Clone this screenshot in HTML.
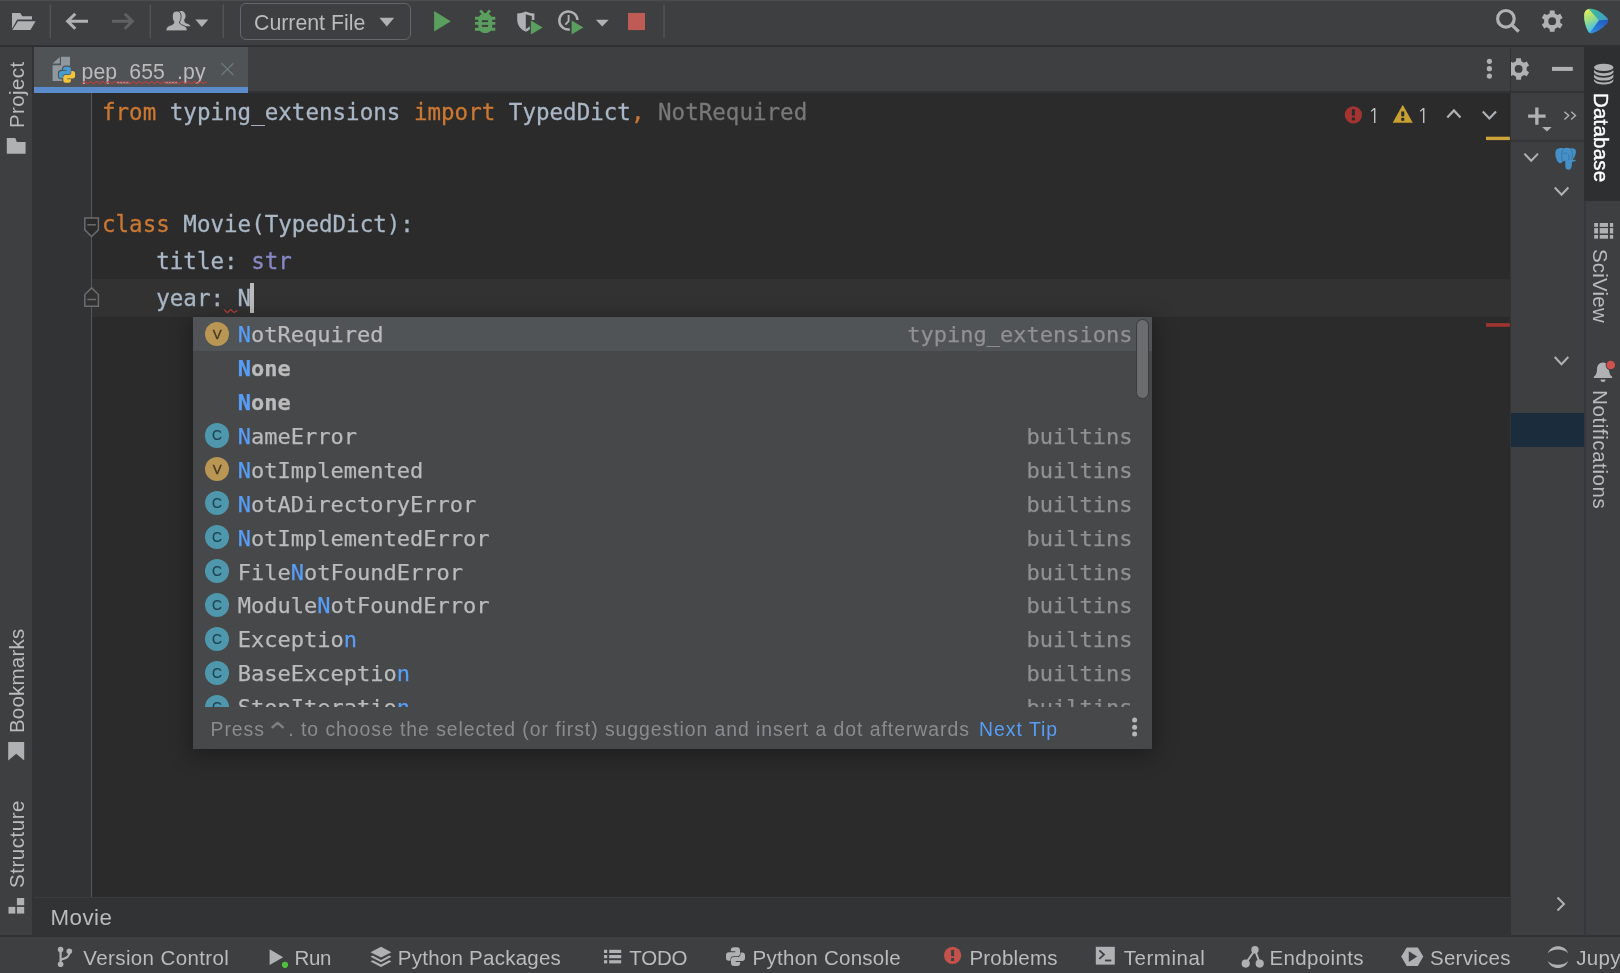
<!DOCTYPE html>
<html lang="en">
<head>
<meta charset="utf-8">
<title>pep_655_.py</title>
<style>
*{box-sizing:border-box;margin:0;padding:0}
html,body{width:1620px;height:973px;overflow:hidden;background:#3e3f41}
body{will-change:transform;position:relative;font-family:"Liberation Sans",sans-serif;color:#bbbbbb;font-size:20px}
.abs{position:absolute}
svg{position:absolute;overflow:visible}
/* top toolbar */
#toolbar{left:0;top:0;width:1620px;height:45px;background:#3e3f41}
#tbline{left:0;top:45px;width:1620px;height:2px;background:#2e3032}
.sep{width:1px;height:33px;top:5px;background:#565859}
#runcfg{left:240px;top:3px;width:171px;height:37px;border:1.5px solid #646769;border-radius:6px}
#runcfg span{position:absolute;left:13px;top:7px;font-size:21.3px;line-height:24px;color:#bbbbbb;white-space:nowrap}
/* left stripe */
#lstripe{left:0;top:47px;width:32px;height:890px;background:#3e3f41}
#lstripeb{left:32px;top:47px;width:2px;height:890px;background:#313335}
.vtext{white-space:nowrap;font-size:20.5px;line-height:24px;color:#bbbbbb}
.vup{transform-origin:0 0;transform:rotate(-90deg)}
.vdn{transform-origin:0 0;transform:rotate(90deg)}
/* tab bar */
#tabbar{left:34px;top:47px;width:1476px;height:46px;background:#3e3f41;border-bottom:2px solid #323335}
#tab{left:34px;top:47px;width:214px;height:41px;background:#505355}
#tabul{left:34px;top:87.4px;width:214px;height:5.6px;background:#5a8ccb}
#tabtxt{left:81.5px;top:60px;letter-spacing:.15px;font-size:21.2px;line-height:24px;color:#bbbbbb;white-space:nowrap}
/* editor */
#editor{left:34px;top:93px;width:1476px;height:804.5px;background:#2b2b2b;overflow:hidden}
#gutter{left:34px;top:93px;width:57px;height:804.5px;background:#313335}
#gline{left:91px;top:93px;width:1.4px;height:804.5px;background:#555759}
#curline{left:92.3px;top:279px;width:1417.6px;height:38px;background:#323232}
.code{font-family:"DejaVu Sans Mono","Liberation Mono",monospace;font-size:22.5px;line-height:37.33px;white-space:pre;color:#a9b7c6;left:102px;letter-spacing:0.015px;-webkit-text-stroke:.3px}
.kw{color:#cc7832}.bi{color:#8888c6}.un{color:#787878}
#caret{left:249.9px;top:283px;width:3.7px;height:30px;background:#bbbbbb}
.big1{font-family:"NanumGothic","Liberation Sans",sans-serif;font-size:20px;line-height:24px;color:#c2c2c2;margin-top:.6px;margin-left:.3px}
/* popup */
#popup{left:193px;top:316.5px;width:959px;height:432.5px;background:#46484a;box-shadow:0 4px 20px 3px rgba(0,0,0,.3);overflow:hidden}
#psel{left:0;top:0;width:959px;height:34px;background:#515457}
.row{left:0;width:959px;height:33.95px;font-family:"DejaVu Sans Mono","Liberation Mono",monospace;font-size:22px;line-height:33.95px;white-space:pre;color:#bbbbbb;-webkit-text-stroke:.25px}
.row .n{position:absolute;left:44.8px;top:1.4px}
.row .t{position:absolute;right:19.5px;top:1.4px;color:#8f9192}
.row b{font-weight:normal;color:#589df6}
.row .bold,.row .bold b{font-weight:bold}
.ic{position:absolute;left:12px;top:5px;width:24.2px;height:24.2px;border-radius:50%;font-family:"Liberation Sans",sans-serif;font-size:13.4px;line-height:26.2px;text-align:center;font-weight:normal;-webkit-text-stroke:.35px currentColor}
.ic.v{background:#b99653;color:#453a22}
.ic.c{background:#4f97ad;color:#1f4452;font-size:13.8px;line-height:26px;-webkit-text-stroke:.15px currentColor}
#plist{left:0;top:0;width:959px;height:390.8px;overflow:hidden}
#pfoot{left:0;top:390.8px;width:959px;height:41.7px;background:#46484a}
#ptip{left:17.5px;top:9.7px;font-size:19.4px;line-height:24px;color:#8a8c8d;white-space:nowrap;letter-spacing:.95px}
#ptip span{font-family:"DejaVu Sans",sans-serif;display:inline-block;transform-origin:50% 30%;transform:translate(-1.1px,1.1px) scale(1.62,1.45);opacity:.8}
#pnext{left:786px;top:9.7px;font-size:19.4px;line-height:24px;color:#589df6;white-space:nowrap;letter-spacing:1px}
#pscroll{left:942.6px;top:2.8px;width:13.4px;height:79.6px;border-radius:6.7px;background:#6b6c6e;border:1.2px solid #393b3d}
/* right db panel */
#dbpanel{left:1511px;top:47px;width:74px;height:890px;background:#3e3f41}
#dbl{left:1509.7px;top:47px;width:1.5px;height:890px;background:#323335}
#dbhl{left:1511px;top:91px;width:74px;height:1.5px;background:#323335}
#dbhl2{left:1511px;top:140.4px;width:74px;height:1.2px;background:#343638}
#dbsel{left:1511px;top:413px;width:74px;height:34px;background:#1b2c3c}
#rstripe{left:1585px;top:47px;width:35px;height:890px;background:#3e3f41}
#rstripel{left:1584.4px;top:47px;width:1.6px;height:889px;background:#35373a}
#dbbtn{left:1584.4px;top:47px;width:35.6px;height:153.5px;background:#2d2f30}
/* breadcrumbs */
#crumb{left:34px;top:898px;width:1476px;height:39px;background:#313335}
#crumbl{left:34px;top:897px;width:1476px;height:1px;background:#3a3c3e}
#crumbt{left:50.5px;top:905px;font-size:22.3px;line-height:26px;color:#bbbbbb;letter-spacing:.5px}
/* bottom bar */
#bbar{left:0;top:937px;width:1620px;height:36px;background:#3e3f41}
#bbarl{left:0;top:935.4px;width:1620px;height:1.7px;background:#323335}
.bt{top:945.5px;font-size:20.5px;line-height:24px;color:#bbbbbb;white-space:nowrap}
</style>
</head>
<body>
<div class="abs" id="toolbar"></div>
<div class="abs" id="tbline"></div>
<!--TB-->
<svg id="tbicons" style="left:0;top:0" width="1620" height="46" viewBox="0 0 1620 46">
<rect x="0" y="0" width="1620" height="1.2" fill="#4a4c4e"/>
<!-- folder -->
<path d="M12 13 H20.2 L22.3 16.2 H32 V19.6 H17.2 L12 28.8Z" fill="#afb1b3"/>
<path d="M18 21.2 H35.6 L30.4 30 H12.3Z" fill="#afb1b3"/>
<!-- separators -->
<rect x="49.6" y="4.5" width="1.3" height="33.5" fill="#555759"/>
<rect x="149.6" y="4.5" width="1.3" height="33.5" fill="#555759"/>
<rect x="222.6" y="4.5" width="1.3" height="33.5" fill="#555759"/>
<rect x="663.4" y="4.5" width="1.3" height="33.5" fill="#555759"/>
<!-- back / forward -->
<path d="M88 21.3 H68 M75.3 13.8 L67.6 21.3 L75.3 28.8" fill="none" stroke="#afb1b3" stroke-width="3"/>
<path d="M112 21.3 H132 M124.7 13.8 L132.4 21.3 L124.7 28.8" fill="none" stroke="#5f6163" stroke-width="3"/>
<!-- users -->
<ellipse cx="181.300" cy="16" rx="4.300" ry="5.100" fill="#afb1b3"/>
<path d="M178 20 H184.200 C184.200 22.400 185.200 23 187.300 23.800 C189.400 24.600 190.300 25.200 190.300 26.300 H178Z" fill="#afb1b3"/>
<path d="M165.900 30.900 C165.900 27.600 167.300 26.300 170.300 25.300 C172.800 24.400 173.900 23.700 174 22 C172.900 20.800 172.300 18.800 172.300 16.100 C172.300 13 173.900 11.100 176.700 11.100 C179.500 11.100 181.100 13 181.100 16.100 C181.100 18.800 180.500 20.800 179.400 22 C179.500 23.700 180.600 24.400 183.100 25.300 C186.100 26.300 187.200 27.600 187.200 30.900 Z" fill="#afb1b3" stroke="#3e3f41" stroke-width="0.900"/>
<rect x="165" y="30.900" width="23" height="1.500" fill="#3e3f41"/>
<path d="M195.400 19.600 H208.300 L201.850 26.900Z" fill="#afb1b3"/>
<!-- run config dropdown triangle -->
<path d="M379.4 17.8 H394.2 L386.8 26.6Z" fill="#afb1b3"/>
<!-- run -->
<path d="M434.1 11.1 L450.8 21.3 L434.1 31.4Z" fill="#5a9f5e"/>
<!-- bug -->
<g fill="none" stroke="#5a9f5e">
<path d="M480.300 10.300 L484.300 15.200 M490 10.300 L486 15.200" stroke-width="2.700"/>
<path d="M475 18.300 H495.300 M475 23.400 H495.300 M475 29.200 H495.300" stroke-width="2.900"/>
</g>
<path d="M478.300 20.300 c0 -4.600 3.100 -7 6.950 -7 c3.850 0 6.950 2.400 6.950 7 v5.600 c0 4.600 -3.100 7.100 -6.950 7.100 c-3.850 0 -6.950 -2.500 -6.950 -7.100z" fill="#5a9f5e"/>
<rect x="481.900" y="20.200" width="6.200" height="2" fill="#3e3f41"/>
<rect x="481.900" y="24.900" width="6.200" height="2" fill="#3e3f41"/>
<!-- coverage shield -->
<path d="M517.2 13.6 c3 -0.200 5.800 -1 8.600 -2.100 c2.800 1.100 5.600 1.900 8.600 2.100 v6.500 h-2.600 v-4.200 c-2.100 -0.300 -4 -0.800 -6 -1.600 v17.400 c-4.900 -2 -8.600 -6.200 -8.600 -12.100z" fill="#afb1b3"/>
<path d="M525.800 29 v2.700 c1.500 -0.600 2.800 -1.400 4 -2.500 v-3 c-1.100 1.200 -2.500 2.200 -4 2.800z" fill="#afb1b3"/>
<path d="M530.9 20.400 L542.700 27.500 L530.900 34.600Z" fill="#5a9f5e"/>
<!-- profiler clock -->
<path d="M577.500 20 A9.100 9.100 0 1 0 569.800 29.500" fill="none" stroke="#afb1b3" stroke-width="2.500"/>
<path d="M568.600 15 V21.200 L565.300 24.600" fill="none" stroke="#afb1b3" stroke-width="1.900"/>
<path d="M571.600 20.400 L583.400 27.500 L571.600 34.600Z" fill="#5a9f5e"/>
<path d="M595.800 19.700 H608.700 L602.250 26.600Z" fill="#afb1b3"/>
<!-- stop -->
<rect x="628" y="12.900" width="17" height="17.200" fill="#be5b55"/>
<!-- search -->
<circle cx="1505.900" cy="18.800" r="8.300" fill="none" stroke="#afb1b3" stroke-width="3.200"/>
<path d="M1511.800 24.900 L1518.700 31.600" stroke="#afb1b3" stroke-width="3.400" fill="none"/>
<!-- gear -->
<path d="M1554.82 28.97 L1554.58 31.84 L1549.82 31.84 L1549.58 28.97 L1546.78 27.35 L1544.18 28.58 L1541.80 24.46 L1544.16 22.82 L1544.16 19.58 L1541.80 17.94 L1544.18 13.82 L1546.78 15.05 L1549.58 13.43 L1549.82 10.56 L1554.58 10.56 L1554.82 13.43 L1557.62 15.05 L1560.22 13.82 L1562.60 17.94 L1560.24 19.58 L1560.24 22.82 L1562.60 24.46 L1560.22 28.58 L1557.62 27.35Z M1556.10 21.20 A3.9 3.9 0 1 0 1548.30 21.20 A3.9 3.9 0 1 0 1556.10 21.20Z" fill="#afb1b3" fill-rule="evenodd"/>
<!-- space icon -->
<defs>
<linearGradient id="sg1" x1="0" y1="0" x2="0.350" y2="1"><stop offset="0" stop-color="#f6ee54"/><stop offset="0.450" stop-color="#a6e07c"/><stop offset="1" stop-color="#3fc0e8"/></linearGradient>
<linearGradient id="sg2" x1="0" y1="0" x2="1" y2="1"><stop offset="0" stop-color="#3fc28a"/><stop offset="1" stop-color="#3b8fe0"/></linearGradient>
<linearGradient id="sg3" x1="1" y1="0" x2="0" y2="1"><stop offset="0" stop-color="#2456b8"/><stop offset="1" stop-color="#2f8fe6"/></linearGradient>
</defs>
<path d="M1588 9.200 c-2.400 0.800 -3.600 2.400 -3.800 5.500 c-0.300 5.500 1.200 11.500 3.800 16.300 c0.900 1.700 2.200 2.500 4.200 2 c5.400 -1.600 10.600 -5.200 14.600 -9.800 c1.400 -1.700 1.700 -3.100 0.600 -4.900 c-3.600 -4.600 -9 -8.200 -15 -9.400 c-1.700 -0.300 -3.100 -0.200 -4.400 0.300z" fill="url(#sg2)"/>
<path d="M1598.800 20.200 L1608 19.800 c0.500 1.200 0.100 2.200 -0.700 3.300 c-4 4.700 -9.400 8.400 -15.100 9.900 c-1 0.300 -1.900 0.200 -2.700 -0.300z" fill="url(#sg3)"/>
<path d="M1588 9.200 c-2.400 0.800 -3.600 2.400 -3.800 5.500 c-0.300 5.500 1.200 11.500 3.800 16.300 c0.500 0.900 1 1.500 1.700 1.900 L1598.800 20.200 L1588.800 9z" fill="url(#sg1)"/>
</svg>
<!--/TB-->
<div class="abs" id="runcfg"><span>Current File</span></div>

<!-- structure placeholders -->
<div class="abs" id="lstripe"></div>
<div class="abs" id="lstripeb"></div>
<div class="abs" id="tabbar"></div>
<div class="abs" id="tab"></div>
<div class="abs" id="tabul"></div>
<div class="abs" id="tabtxt">pep_655_.py</div>

<div class="abs" id="editor"></div>
<div class="abs" id="gutter"></div>
<div class="abs" id="gline"></div>
<div class="abs" id="curline"></div>

<div class="abs code" style="top:93.5px">&#8203;<span class="kw">from</span> typing_extensions <span class="kw">import</span> TypedDict<span class="kw">,</span> <span class="un">NotRequired</span></div>
<div class="abs code" style="top:205.5px"><span class="kw">class</span> Movie(TypedDict):</div>
<div class="abs code" style="top:242.8px">    title: <span class="bi">str</span></div>
<div class="abs code" style="top:280.2px">    year: N</div>
<div class="abs" id="caret"></div>

<!--ED-->
<svg id="edicons" style="left:0;top:46px" width="1620" height="927" viewBox="0 46 1620 927">
<!-- python file icon -->
<g>
<path d="M52.6 63.6 L59.8 57 V63.6Z" fill="#8f989f"/>
<path d="M61 56.800 H70 V81 H52.600 V65.200 H61Z" fill="#8f989f"/>
<g transform="translate(67.050 74.650) scale(0.850) translate(-735.500 -956.600)" fill="#505355" stroke="#505355" stroke-width="2.600" stroke-linejoin="round"><path d="M730.800 950.200 Q730.800 947.200 733.800 947.200 H737 Q740 947.200 740 950.200 V953.600 Q740 956.200 737.200 956.200 H733.600 Q730.500 956.200 730.500 959.300 V960.800 H729 Q726 960.800 726 957.800 V955.200 Q726 952.200 729 952.200 H735.300 V951.300 H730.800Z"/><path d="M730.800 950.200 Q730.800 947.200 733.800 947.200 H737 Q740 947.200 740 950.200 V953.600 Q740 956.200 737.200 956.200 H733.600 Q730.500 956.200 730.500 959.300 V960.800 H729 Q726 960.800 726 957.800 V955.200 Q726 952.200 729 952.200 H735.300 V951.300 H730.800Z" transform="rotate(180 735.500 956.600)"/></g>
<g transform="translate(67.050 74.650) scale(0.850) translate(-735.500 -956.600)"><path d="M730.800 950.200 Q730.800 947.200 733.800 947.200 H737 Q740 947.200 740 950.200 V953.600 Q740 956.200 737.200 956.200 H733.600 Q730.500 956.200 730.500 959.300 V960.800 H729 Q726 960.800 726 957.800 V955.200 Q726 952.200 729 952.200 H735.300 V951.300 H730.800Z" fill="#479bd0"/><path d="M730.800 950.200 Q730.800 947.200 733.800 947.200 H737 Q740 947.200 740 950.200 V953.600 Q740 956.200 737.200 956.200 H733.600 Q730.500 956.200 730.500 959.300 V960.800 H729 Q726 960.800 726 957.800 V955.200 Q726 952.200 729 952.200 H735.300 V951.300 H730.800Z" fill="#f2c43a" transform="rotate(180 735.500 956.600)"/></g>
</g>
<!-- tab squiggle -->
<path d="M81.5 83.6 L84.5 81.5 L87.6 83.6 L90.6 81.5 L93.7 83.6 L96.7 81.5 L99.8 83.6 L102.8 81.5 L105.9 83.6 L108.9 81.5 L112.0 83.6 L115.0 81.5 L118.1 83.6 L121.1 81.5 L124.2 83.6 L127.2 81.5 L130.3 83.6 L133.3 81.5 L136.4 83.6 L139.4 81.5 L142.5 83.6 L145.6 81.5 L148.6 83.6 L151.7 81.5 L154.7 83.6 L157.8 81.5 L160.8 83.6 L163.9 81.5 L166.9 83.6 L170.0 81.5 L173.0 83.6 L176.1 81.5 L179.1 83.6 L182.2 81.5 L185.2 83.6 L188.3 81.5 L191.3 83.6 L194.4 81.5 L197.4 83.6 L200.5 81.5 L203.5 83.6 L206.6 81.5" fill="none" stroke="#b8403c" stroke-width="1.050"/>
<!-- close x -->
<path d="M221.500 63.200 L233.400 75 M233.400 63.200 L221.500 75" stroke="#6e7678" stroke-width="1.400" fill="none"/>
<!-- left stripe: project folder -->
<path d="M6.800 138 H15.300 L16.800 142 H25.600 V153.800 H6.800Z" fill="#afb1b3"/>
<!-- bookmark -->
<path d="M8.200 742 H24.200 V760.600 L16.200 753.800 L8.200 760.600Z" fill="#afb1b3"/>
<!-- structure -->
<rect x="16.900" y="898" width="7.300" height="7.200" fill="#afb1b3"/>
<rect x="8.500" y="906.900" width="6.800" height="6.700" fill="#afb1b3"/>
<rect x="16.900" y="906.900" width="7.300" height="6.700" fill="#afb1b3"/>
<!-- fold markers -->
<path d="M84.800 218 H98.400 V229.900 L91.600 236.500 L84.800 229.900Z" fill="#2b2b2b" stroke="#6a6c6e" stroke-width="1.500"/>
<path d="M87.300 224.800 H95.900" stroke="#6a6c6e" stroke-width="1.500"/>
<path d="M84.800 306.200 H98.400 V294.500 L91.600 287.900 L84.800 294.500Z" fill="#323232" stroke="#6a6c6e" stroke-width="1.500"/>
<path d="M87.300 299.500 H95.900" stroke="#6a6c6e" stroke-width="1.500"/>
<!-- squiggle under space -->
<path d="M224.200 309.800 L227.400 312.600 L230.700 309.600 L234 312.600 L237.400 310.400" fill="none" stroke="#bc3f3c" stroke-width="1.200"/>
<!-- inspection widget -->
<circle cx="1353.400" cy="114.900" r="8.600" fill="#a3342f"/>
<rect x="1351.900" y="109.300" width="3" height="6.300" fill="#2b2b2b"/>
<rect x="1351.900" y="117.400" width="3" height="3" fill="#2b2b2b"/>
<path d="M1402.750 104.700 L1412.800 122.700 H1392.700Z" fill="#c9a132"/>
<rect x="1401.250" y="111.500" width="3" height="4.800" fill="#2b2b2b"/>
<rect x="1401.250" y="117.800" width="3" height="3" fill="#2b2b2b"/>
<path d="M1447.300 117.500 L1453.900 110.400 L1460.500 117.500" fill="none" stroke="#afb1b3" stroke-width="2.200"/>
<path d="M1482.800 111.500 L1489.400 118.500 L1496 111.500" fill="none" stroke="#afb1b3" stroke-width="2.200"/>
<!-- stripe markers -->
<rect x="1486" y="136.700" width="23.900" height="3.400" fill="#cda43a"/>
<rect x="1486" y="323.100" width="23.900" height="3.700" fill="#9e342d"/>
<!-- tab bar right: dots -->
<circle cx="1489.400" cy="61.300" r="2.600" fill="#afb1b3"/>
<circle cx="1489.400" cy="68.700" r="2.600" fill="#afb1b3"/>
<circle cx="1489.400" cy="76.100" r="2.600" fill="#afb1b3"/>
</svg>
<!--/ED-->
<!-- POPUP -->
<div class="abs" id="popup">
  <div class="abs" id="plist">
    <div class="abs" id="psel"></div>
    <div class="abs row" style="top:0.0px"><span class="ic v">V</span><span class="n"><b>N</b>otRequired</span><span class="t">typing_extensions</span></div>
    <div class="abs row" style="top:33.95px"><span class="n bold"><b>N</b>one</span></div>
    <div class="abs row" style="top:67.9px"><span class="n bold"><b>N</b>one</span></div>
    <div class="abs row" style="top:101.85px"><span class="ic c">C</span><span class="n"><b>N</b>ameError</span><span class="t">builtins</span></div>
    <div class="abs row" style="top:135.8px"><span class="ic v">V</span><span class="n"><b>N</b>otImplemented</span><span class="t">builtins</span></div>
    <div class="abs row" style="top:169.75px"><span class="ic c">C</span><span class="n"><b>N</b>otADirectoryError</span><span class="t">builtins</span></div>
    <div class="abs row" style="top:203.7px"><span class="ic c">C</span><span class="n"><b>N</b>otImplementedError</span><span class="t">builtins</span></div>
    <div class="abs row" style="top:237.65px"><span class="ic c">C</span><span class="n">File<b>N</b>otFoundError</span><span class="t">builtins</span></div>
    <div class="abs row" style="top:271.6px"><span class="ic c">C</span><span class="n">Module<b>N</b>otFoundError</span><span class="t">builtins</span></div>
    <div class="abs row" style="top:305.55px"><span class="ic c">C</span><span class="n">Exceptio<b>n</b></span><span class="t">builtins</span></div>
    <div class="abs row" style="top:339.5px"><span class="ic c">C</span><span class="n">BaseExceptio<b>n</b></span><span class="t">builtins</span></div>
    <div class="abs row" style="top:373.45px"><span class="ic c">C</span><span class="n">StopIteratio<b>n</b></span><span class="t">builtins</span></div>
  </div>
  <div class="abs" id="pfoot">
    <div class="abs" id="ptip">Press <span>⌃</span>. to choose the selected (or first) suggestion and insert a dot afterwards</div>
    <div class="abs" id="pnext">Next Tip</div>
    <svg style="left:935px;top:8.500px" width="12" height="24" viewBox="0 0 12 24"><circle cx="6.600" cy="4" r="2.500" fill="#b4b6b8"/><circle cx="6.600" cy="11.200" r="2.500" fill="#b4b6b8"/><circle cx="6.600" cy="18.100" r="2.500" fill="#b4b6b8"/></svg>
  </div>
  <div class="abs" id="pscroll"></div>
</div>

<!-- RIGHT -->
<div class="abs" id="dbl"></div>
<div class="abs" id="dbpanel"></div>
<div class="abs" id="dbhl"></div>
<div class="abs" id="dbhl2"></div>
<div class="abs" id="dbsel"></div>
<div class="abs" id="rstripe"></div>
<div class="abs" id="rstripel"></div>
<div class="abs" id="dbbtn"></div>

<!--RT-->
<svg id="rticons" style="left:1500px;top:46px" width="120" height="927" viewBox="1500 46 120 927">
<!-- db panel header: gear (clipped), minus -->
<clipPath id="dbclip"><rect x="1511" y="47" width="74" height="890"/></clipPath>
<g clip-path="url(#dbclip)">
<path d="M1521.22 76.67 L1521.00 79.64 L1516.20 79.64 L1515.98 76.67 L1513.18 75.05 L1510.50 76.35 L1508.10 72.19 L1510.56 70.52 L1510.56 67.28 L1508.10 65.61 L1510.50 61.45 L1513.18 62.75 L1515.98 61.13 L1516.20 58.16 L1521.00 58.16 L1521.22 61.13 L1524.02 62.75 L1526.70 61.45 L1529.10 65.61 L1526.64 67.28 L1526.64 70.52 L1529.10 72.19 L1526.70 76.35 L1524.02 75.05Z M1522.50 68.90 A3.9 3.9 0 1 0 1514.70 68.90 A3.9 3.9 0 1 0 1522.50 68.90Z" fill="#afb1b3" fill-rule="evenodd"/>
</g>
<rect x="1552" y="66.900" width="20.800" height="4" fill="#afb1b3"/>
<!-- plus w/ triangle -->
<path d="M1528.100 116.200 H1545.600 M1536.850 107.600 V124.800" stroke="#afb1b3" stroke-width="3.300" fill="none"/>
<path d="M1542.100 126.900 H1551.700 L1546.900 131.500Z" fill="#afb1b3"/>
<!-- >> -->
<path d="M1564.400 111.800 L1568.700 115.600 L1564.400 119.400 M1571.200 111.800 L1575.500 115.600 L1571.200 119.400" fill="none" stroke="#afb1b3" stroke-width="1.400"/>
<!-- chevrons -->
<path d="M1524.400 153.600 L1531.200 160.800 L1538 153.600" fill="none" stroke="#afb1b3" stroke-width="2"/>
<path d="M1554.800 187.500 L1561.600 194.700 L1568.400 187.500" fill="none" stroke="#afb1b3" stroke-width="2"/>
<path d="M1554.700 357 L1561.500 364.200 L1568.300 357" fill="none" stroke="#afb1b3" stroke-width="2"/>
<path d="M1557.500 897.500 L1564 904 L1557.500 910.500" fill="none" stroke="#afb1b3" stroke-width="2"/>
<!-- postgres elephant -->
<g>
<path d="M1559 148.400 C1556 148.400 1555.200 151 1555.400 154.500 C1555.700 158.500 1557.500 162.500 1559.800 163.200 C1561 163.400 1562 162.600 1562.800 161.500 L1565.200 160.800 L1565.300 166 C1565.400 168.500 1566.500 169.800 1568.300 169.800 C1570.300 169.800 1571.600 168.200 1571.800 165.500 L1572 161.900 L1575.700 160.900 L1575.600 159.700 L1572.800 159.900 C1574.800 157 1576.200 153.500 1575.900 151 C1575.500 148.600 1573 147.800 1570.500 148.600 C1568.500 147.500 1565.500 147.400 1563.500 148.600 C1562 148 1560.500 148 1559 148.400 Z" fill="#4590c6"/>
<path d="M1562.600 149.600 C1561.300 152.500 1561.500 157.500 1562.600 161.500 M1563.800 153.500 C1565 152.600 1566.600 152.800 1567.200 154 M1571.300 149.400 C1572.600 152 1572.800 156 1571.700 159.800 M1568.500 154.500 C1569.300 156.500 1569.200 158.500 1568.600 160" fill="none" stroke="#2f6a94" stroke-width="0.700"/>
</g>
<!-- database icon -->
<g fill="#afb1b3">
<ellipse cx="1603.700" cy="67.400" rx="9.700" ry="3.700"/>
<path d="M1594 70 c2 2.500 5.500 3.200 9.700 3.200 c4.200 0 7.700 -0.700 9.700 -3.200 v2.600 c-2 2.600 -5.500 3.400 -9.700 3.400 c-4.200 0 -7.700 -0.800 -9.700 -3.400z"/>
<path d="M1594 74.600 c2 2.500 5.500 3.200 9.700 3.200 c4.200 0 7.700 -0.700 9.700 -3.200 v2.600 c-2 2.600 -5.500 3.400 -9.700 3.400 c-4.200 0 -7.700 -0.800 -9.700 -3.400z"/>
<path d="M1594 79.200 c2 2.500 5.500 3.200 9.700 3.200 c4.200 0 7.700 -0.700 9.700 -3.200 v1.600 c-1 2.800 -5.500 3.800 -9.700 3.800 c-4.200 0 -8.700 -1 -9.700 -3.800z"/>
</g>
<!-- sciview grid -->
<g fill="#afb1b3">
<rect x="1594.2" y="223" width="3.8" height="3.9"/><rect x="1599.7" y="223" width="8.3" height="3.9"/><rect x="1609.9" y="223" width="3.3" height="3.9"/>
<rect x="1594.2" y="228.1" width="3.8" height="5.4"/><rect x="1599.7" y="228.1" width="8.3" height="5.4"/><rect x="1609.9" y="228.1" width="3.3" height="5.4"/>
<rect x="1594.2" y="235" width="3.8" height="3.7"/><rect x="1599.7" y="235" width="8.3" height="3.7"/><rect x="1609.9" y="235" width="3.3" height="3.7"/>
</g>
<!-- bell -->
<path d="M1603 362.600 c3.600 0 6 2.800 6 6.600 c0 3.600 1 5.800 3.200 7.600 v1.200 h-18.400 v-1.200 c2.200 -1.800 3.200 -4 3.200 -7.600 c0 -3.800 2.400 -6.600 6 -6.600z" fill="#afb1b3"/>
<path d="M1600.500 379.600 h5 a2.500 2.500 0 0 1 -5 0z" fill="#afb1b3"/>
<circle cx="1610.800" cy="365" r="5.200" fill="#3e3f41"/>
<circle cx="1610.800" cy="365" r="4.300" fill="#d1524c"/>
</svg>

<div class="abs vtext vup" style="left:5px;top:127.5px;letter-spacing:.39px">Project</div>
<div class="abs vtext vup" style="left:5px;top:732.5px;letter-spacing:.2px">Bookmarks</div>
<div class="abs vtext vup" style="left:5px;top:887.5px;letter-spacing:.53px">Structure</div>
<div class="abs vtext vdn" style="left:1612.500px;top:93px;color:#fff;-webkit-text-stroke:.4px #fff;letter-spacing:.2px">Database</div>
<div class="abs vtext vdn" style="left:1612px;top:248.500px;letter-spacing:.2px">SciView</div>
<div class="abs vtext vdn" style="left:1612px;top:389.500px;letter-spacing:.6px">Notifications</div>
<div class="abs big1" style="left:1367.600px;top:103.800px">1</div>
<div class="abs big1" style="left:1416.800px;top:103.800px">1</div>
<!--/RT-->
<!-- BOTTOM -->
<div class="abs" id="crumbl"></div>
<div class="abs" id="crumb"></div>
<div class="abs" id="crumbt">Movie</div>
<div class="abs" id="bbar"></div>
<div class="abs" id="bbarl"></div>
<!--BT-->
<svg id="bticons" style="left:0;top:937px" width="1620" height="36" viewBox="0 937 1620 36">
<!-- vcs branch -->
<g fill="none" stroke="#afb1b3" stroke-width="2.200">
<path d="M60.600 951 V963.500"/>
<path d="M69.300 952.500 c0 5 -4 5.500 -8.700 7.500"/>
</g>
<circle cx="60.600" cy="949.600" r="2.800" fill="#afb1b3"/>
<circle cx="60.600" cy="964.300" r="2.800" fill="#afb1b3"/>
<circle cx="69.300" cy="951.300" r="2.800" fill="#afb1b3"/>
<!-- run -->
<path d="M269.600 949.300 L283.200 957.200 L269.600 965.100Z" fill="#afb1b3"/>
<circle cx="285" cy="964.800" r="4.200" fill="#3e3f41"/>
<circle cx="285" cy="964.800" r="3.100" fill="#4fc23c"/>
<!-- layers -->
<path d="M381 946.800 L391.400 952.200 L381 957.600 L370.500 952.200Z" fill="#afb1b3"/>
<path d="M372.600 955.600 L370.500 956.800 L381 962.200 L391.400 956.800 L389.300 955.600 L381 959.900Z" fill="#afb1b3"/>
<path d="M372.600 960.300 L370.500 961.500 L381 966.900 L391.400 961.500 L389.300 960.300 L381 964.600Z" fill="#afb1b3"/>
<!-- todo list -->
<g fill="#afb1b3">
<rect x="604" y="949.800" width="3.200" height="3.200"/><rect x="609.200" y="949.800" width="12" height="3.200"/>
<rect x="604" y="955" width="3.200" height="3.200"/><rect x="609.200" y="955" width="12" height="3.200"/>
<rect x="604" y="960.200" width="3.200" height="3.200"/><rect x="609.200" y="960.200" width="12" height="3.200"/>
</g>
<!-- python console icon -->
<g fill="#afb1b3">
<path d="M730.800 950.200 Q730.800 947.200 733.800 947.200 H737 Q740 947.200 740 950.200 V953.600 Q740 956.200 737.200 956.200 H733.600 Q730.500 956.200 730.500 959.300 V960.800 H729 Q726 960.800 726 957.800 V955.200 Q726 952.200 729 952.200 H735.300 V951.300 H730.800Z"/>
<path d="M730.800 950.200 Q730.800 947.200 733.800 947.200 H737 Q740 947.200 740 950.200 V953.600 Q740 956.200 737.200 956.200 H733.600 Q730.500 956.200 730.500 959.300 V960.800 H729 Q726 960.800 726 957.800 V955.200 Q726 952.200 729 952.200 H735.300 V951.300 H730.800Z" transform="rotate(180 735.500 956.600)"/>
</g>
<!-- problems -->
<circle cx="952.600" cy="955.400" r="8.600" fill="#c4514c"/>
<rect x="951.100" y="949.900" width="3" height="6.300" fill="#3e3f41"/>
<rect x="951.100" y="958" width="3" height="3" fill="#3e3f41"/>
<!-- terminal -->
<rect x="1095.800" y="946.800" width="19" height="17.800" fill="#afb1b3"/>
<path d="M1099.300 950.300 L1104 954.600 L1099.300 958.900" fill="none" stroke="#3e3f41" stroke-width="1.800"/>
<rect x="1105" y="959.600" width="6.300" height="1.800" fill="#3e3f41"/>
<!-- endpoints -->
<path d="M1245.800 963.300 L1255 950 L1259.800 963.300" fill="none" stroke="#afb1b3" stroke-width="2"/>
<circle cx="1255" cy="949.800" r="3.700" fill="#afb1b3"/>
<circle cx="1245.700" cy="963.600" r="4.100" fill="#afb1b3"/>
<circle cx="1259.700" cy="963.600" r="4.100" fill="#afb1b3"/>
<!-- services -->
<path d="M1401.200 956.600 L1406.700 947.400 H1417.800 L1423.300 956.600 L1417.800 965.900 H1406.700Z M1408.800 951.300 V961.900 L1417.200 956.600Z" fill="#afb1b3" fill-rule="evenodd"/>
<!-- jupyter -->
<path d="M1547.600 953.200 c2 -4.600 6 -7 10.400 -7 c4.400 0 8.400 2.400 10.400 7 c-3 -2.700 -6.400 -3.800 -10.400 -3.800 c-4 0 -7.400 1.100 -10.400 3.800z" fill="#afb1b3"/>
<path d="M1547.600 961 c2 4.600 6 7 10.400 7 c4.400 0 8.400 -2.400 10.400 -7 c-3 2.700 -6.400 3.800 -10.400 3.800 c-4 0 -7.400 -1.100 -10.400 -3.800z" fill="#afb1b3"/>
</svg>
<div class="abs bt" style="left:83.300px;letter-spacing:.39px">Version Control</div>
<div class="abs bt" style="left:294.500px;letter-spacing:-.4px">Run</div>
<div class="abs bt" style="left:397.800px;letter-spacing:.25px">Python Packages</div>
<div class="abs bt" style="left:629.300px;letter-spacing:-.2px">TODO</div>
<div class="abs bt" style="left:752.600px;letter-spacing:.26px">Python Console</div>
<div class="abs bt" style="left:969.400px;letter-spacing:.22px">Problems</div>
<div class="abs bt" style="left:1123.800px;letter-spacing:.52px">Terminal</div>
<div class="abs bt" style="left:1269.400px;letter-spacing:.38px">Endpoints</div>
<div class="abs bt" style="left:1430px;letter-spacing:.27px">Services</div>
<div class="abs bt" style="left:1576.300px;letter-spacing:.3px">Jupyter</div>
<!--/BT-->

</body>
</html>
